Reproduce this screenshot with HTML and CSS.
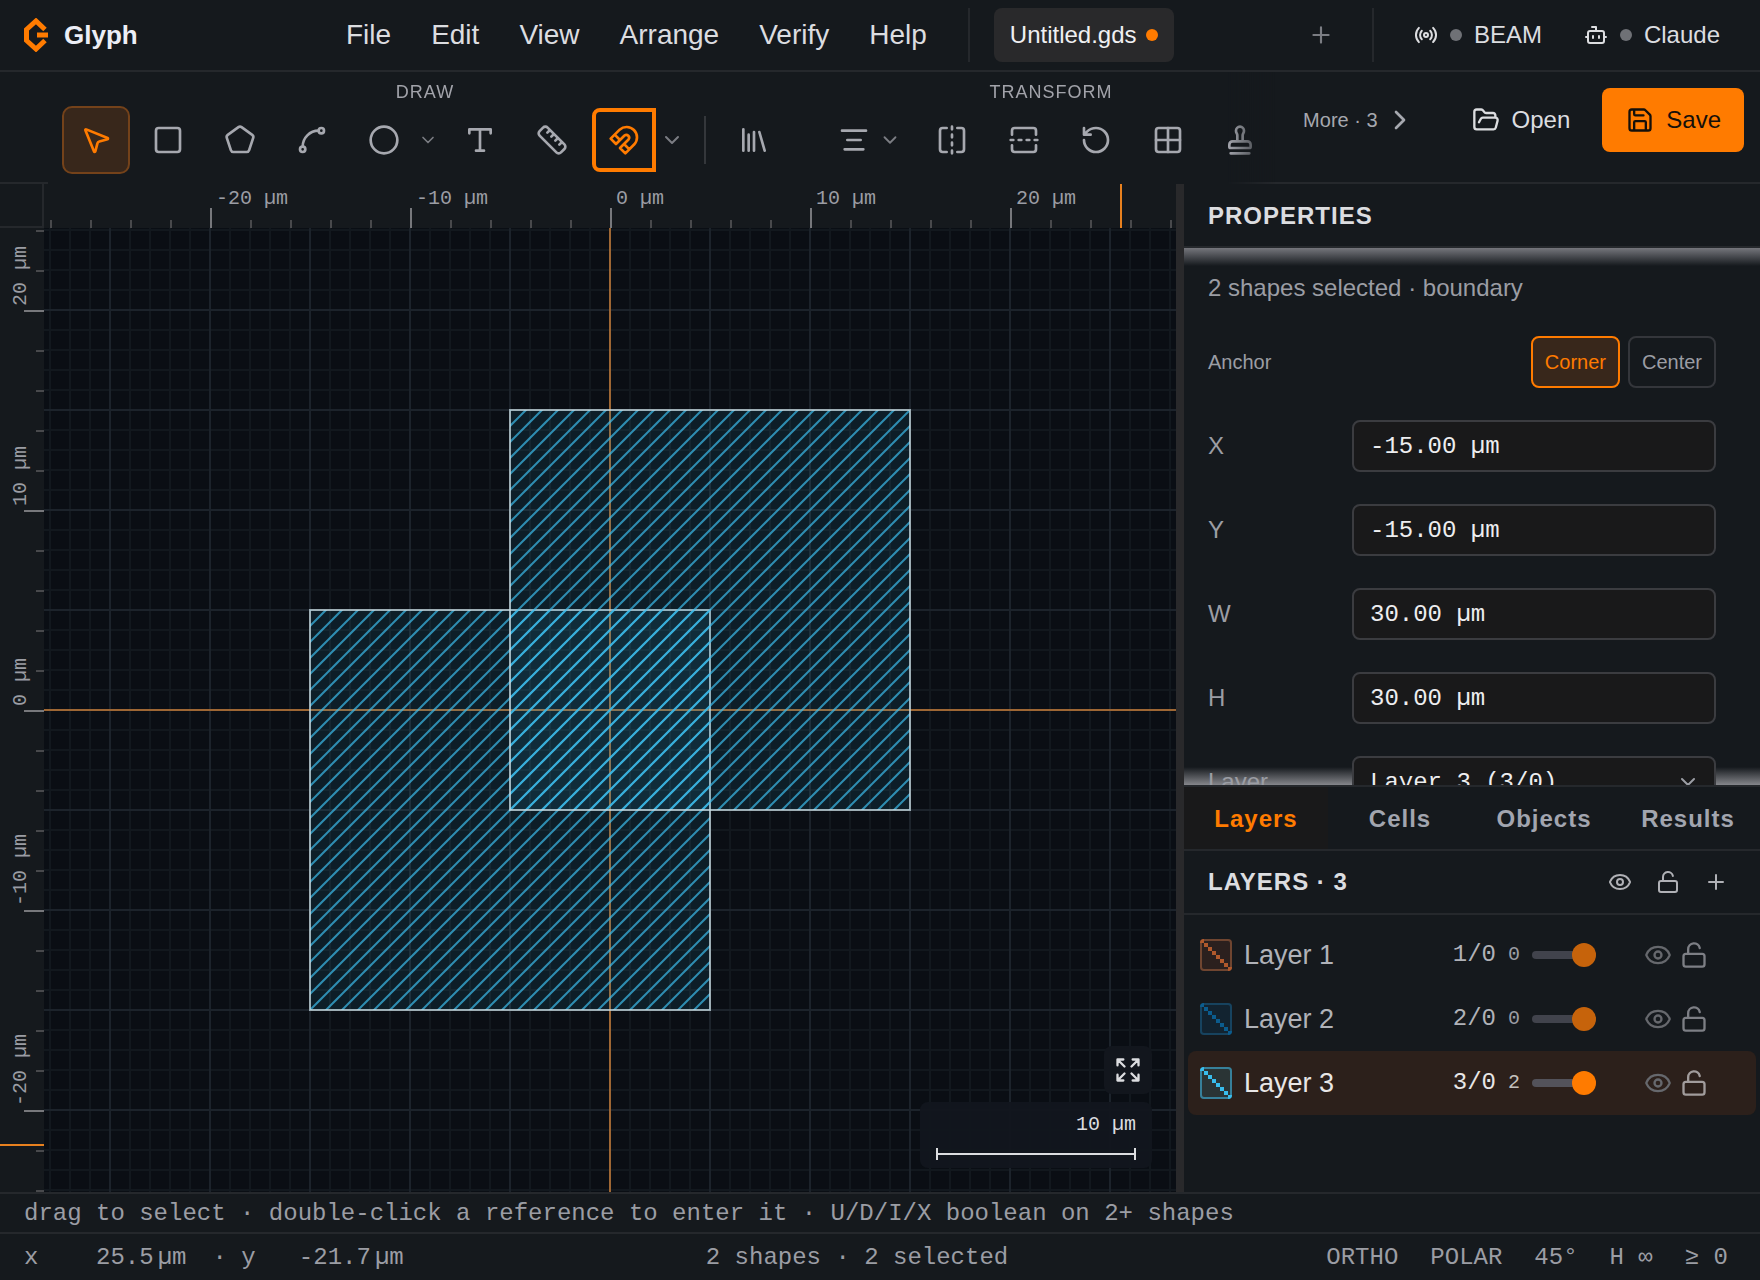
FILE: index.html
```html
<!DOCTYPE html>
<html lang="en">
<head>
<meta charset="utf-8">
<title>Glyph</title>
<link rel="stylesheet" href="styles.css">
</head>
<body>
<svg class="defs" aria-hidden="true">
  <symbol id="i-chevron" viewBox="0 0 24 24"><path d="m6 9 6 6 6-6"/></symbol>
  <symbol id="i-eye" viewBox="0 0 24 24"><path d="M2.062 12.348a1 1 0 0 1 0-.696 10.75 10.75 0 0 1 19.876 0 1 1 0 0 1 0 .696 10.75 10.75 0 0 1-19.876 0"/><circle cx="12" cy="12" r="3"/></symbol>
  <symbol id="i-unlock" viewBox="0 0 24 24"><rect width="18" height="11" x="3" y="11" rx="2"/><path d="M7 11V7a5 5 0 0 1 9.9-1"/></symbol>
  <symbol id="i-plus" viewBox="0 0 24 24"><path d="M5 12h14M12 5v14"/></symbol>
  <symbol id="i-steps" viewBox="0 0 32 32"><path d="M0 0h4v4h4v4h4v4h4v4h4v4h4v4h4v4h4v4h-4v-4h-4v-4h-4v-4h-4v-4h-4v-4h-4v-4h-4v-4h-4z"/></symbol>
</svg>

<div class="app">
  <header class="menubar">
    <div class="brand">
      <svg class="logo" viewBox="0 0 24 34"><path d="M21 11.5 12 3 2.5 11.500V22.500L12 31l9-8.500M24 17H13"/></svg>
      <span>Glyph</span>
    </div>
    <nav class="menus">
      <button>File</button><button>Edit</button><button>View</button><button>Arrange</button><button>Verify</button><button>Help</button>
    </nav>
    <span class="rule"></span>
    <div class="doc-tabs">
      <button class="doc-tab">Untitled.gds<span class="dot dirty"></span></button>
      <button class="new-tab" aria-label="New tab"><svg class="icon s26 thin"><use href="#i-plus"/></svg></button>
    </div>
    <span class="rule"></span>
    <div class="links">
      <button><svg class="icon s24" viewBox="0 0 24 24"><path d="M4.900 19.100C1 15.200 1 8.800 4.900 4.900M7.800 16.200c-2.300-2.300-2.300-6.100 0-8.500"/><circle cx="12" cy="12" r="2"/><path d="M16.200 7.800c2.300 2.300 2.300 6.100 0 8.500M19.100 4.900C23 8.800 23 15.100 19.100 19"/></svg><span class="dot"></span>BEAM</button>
      <button><svg class="icon s24" viewBox="0 0 24 24"><path d="M12 8V4H8"/><rect width="16" height="12" x="4" y="8" rx="2"/><path d="M2 14h2M20 14h2M15 13v2M9 13v2"/></svg><span class="dot"></span>Claude</button>
    </div>
  </header>

  <div class="toolbar">
    <div class="tool-strip">
      <section class="tool-group">
        <h2>DRAW</h2>
        <div class="tools">
          <button class="tool active" aria-label="Select"><svg class="icon s32" viewBox="0 0 24 24"><path d="M4.037 4.688a.495.495 0 0 1 .651-.651l16 6.500a.5.5 0 0 1-.063.947l-6.124 1.580a2 2 0 0 0-1.438 1.435l-1.579 6.126a.5.5 0 0 1-.947.063z"/></svg></button>
          <button class="tool" aria-label="Rectangle"><svg class="icon s32" viewBox="0 0 24 24"><rect width="18" height="18" x="3" y="3" rx="2"/></svg></button>
          <button class="tool" aria-label="Polygon"><svg class="icon s32" viewBox="0 0 24 24"><path d="M10.830 2.380a2 2 0 0 1 2.340 0l8 5.740a2 2 0 0 1 .73 2.250l-3.040 9.260a2 2 0 0 1-1.900 1.370H7.040a2 2 0 0 1-1.900-1.370L2.100 10.370a2 2 0 0 1 .73-2.250z"/></svg></button>
          <button class="tool" aria-label="Path"><svg class="icon s32" viewBox="0 0 24 24"><circle cx="19" cy="5" r="2"/><circle cx="5" cy="19" r="2"/><path d="M5 17A12 12 0 0 1 17 5"/></svg></button>
          <div class="split circle-split">
            <button class="tool" aria-label="Circle"><svg class="icon s32" viewBox="0 0 24 24"><circle cx="12" cy="12" r="10"/></svg></button>
            <button class="more-shapes" aria-label="More shapes"><svg class="icon s20"><use href="#i-chevron"/></svg></button>
          </div>
          <button class="tool" aria-label="Text"><svg class="icon s32" viewBox="0 0 24 24"><path d="M4 7V4h16v3M9 20h6M12 4v16"/></svg></button>
          <button class="tool" aria-label="Ruler"><svg class="icon s32" viewBox="0 0 24 24"><path d="M21.300 15.300a2.400 2.400 0 0 1 0 3.400l-2.600 2.600a2.400 2.400 0 0 1-3.400 0L2.700 8.700a2.410 2.410 0 0 1 0-3.400l2.600-2.600a2.410 2.410 0 0 1 3.400 0ZM14.500 12.500l2-2M11.500 9.500l2-2M8.500 6.500l2-2M17.500 15.500l2-2"/></svg></button>
          <div class="split snap-split">
            <button class="tool snap" aria-label="Snap"><svg class="icon s32" viewBox="0 0 24 24"><path d="m6 15-4-4 6.750-6.770a7.790 7.790 0 0 1 11 11L13 22l-4-4 6.390-6.360a2.140 2.140 0 0 0-3-3L6 15M5 8l4 4M12 15l4 4"/></svg></button>
            <button class="more-shapes wide" aria-label="Snap options"><svg class="icon s24"><use href="#i-chevron"/></svg></button>
          </div>
          <span class="tool-rule"></span>
          <button class="tool" aria-label="Library"><svg class="icon s32" viewBox="0 0 24 24"><path d="m16 6 4 14M12 6v14M8 8v12M4 4v16"/></svg></button>
        </div>
      </section>
      <section class="tool-group">
        <h2>TRANSFORM</h2>
        <div class="tools">
          <div class="split align-split">
            <button class="tool narrow" aria-label="Align"><svg class="icon s32" viewBox="0 0 24 24"><path d="M21 5H3M17 12H7M19 19H5"/></svg></button>
            <button class="more-shapes" aria-label="Align options"><svg class="icon s22"><use href="#i-chevron"/></svg></button>
          </div>
          <button class="tool" aria-label="Flip horizontal"><svg class="icon s32" viewBox="0 0 24 24"><path d="M8 3H5a2 2 0 0 0-2 2v14c0 1.100.9 2 2 2h3M16 3h3a2 2 0 0 1 2 2v14a2 2 0 0 1-2 2h-3M12 20v2M12 14v2M12 8v2M12 2v2"/></svg></button>
          <button class="tool" aria-label="Flip vertical"><svg class="icon s32" viewBox="0 0 24 24"><path d="M21 8V5a2 2 0 0 0-2-2H5a2 2 0 0 0-2 2v3M21 16v3a2 2 0 0 1-2 2H5a2 2 0 0 1-2-2v-3M4 12H2M10 12H8M16 12h-2M22 12h-2"/></svg></button>
          <button class="tool" aria-label="Rotate"><svg class="icon s32" viewBox="0 0 24 24"><path d="M3 12a9 9 0 1 0 9-9 9.750 9.750 0 0 0-6.740 2.740L3 8M3 3v5h5"/></svg></button>
          <button class="tool" aria-label="Array"><svg class="icon s32" viewBox="0 0 24 24"><rect width="18" height="18" x="3" y="3" rx="2"/><path d="M3 12h18M12 3v18"/></svg></button>
          <button class="tool" aria-label="Stamp"><svg class="icon s32" viewBox="0 0 24 24"><path d="M5 22h14M19.270 13.730A2.500 2.500 0 0 0 17.500 13h-11A2.500 2.500 0 0 0 4 15.500V17a1 1 0 0 0 1 1h14a1 1 0 0 0 1-1v-1.500c0-.66-.26-1.300-.73-1.770ZM14 13V8.500C14 7 15 7 15 5a3 3 0 0 0-6 0c0 2 1 2 1 3.500V13"/></svg></button>
        </div>
      </section>
    </div>
    <div class="file-actions">
      <button class="more">More · 3<svg class="icon s32 right"><use href="#i-chevron"/></svg></button>
      <button class="open"><svg class="icon s28" viewBox="0 0 24 24"><path d="m6 14 1.500-2.900A2 2 0 0 1 9.240 10H20a2 2 0 0 1 1.940 2.500l-1.540 6a2 2 0 0 1-1.950 1.500H4a2 2 0 0 1-2-2V5a2 2 0 0 1 2-2h3.900a2 2 0 0 1 1.690.9l.81 1.200a2 2 0 0 0 1.670.9H18a2 2 0 0 1 2 2v2"/></svg>Open</button>
      <button class="save"><svg class="icon s28" viewBox="0 0 24 24"><path d="M15.200 3a2 2 0 0 1 1.400.6l3.800 3.800a2 2 0 0 1 .6 1.400V19a2 2 0 0 1-2 2H5a2 2 0 0 1-2-2V5a2 2 0 0 1 2-2zM17 21v-7a1 1 0 0 0-1-1H8a1 1 0 0 0-1 1v7M7 3v4a1 1 0 0 0 1 1h7"/></svg>Save</button>
    </div>
  </div>

  <main class="workspace">
    <div class="stage">
      <div class="corner"></div>
      <svg class="ruler">
        <defs>
          <pattern id="tx" width="40" height="44" patternUnits="userSpaceOnUse"><rect x="10" y="36" width="2" height="8" fill="#48494c"/></pattern>
          <pattern id="ty" width="44" height="40" patternUnits="userSpaceOnUse"><rect x="36" y="30" width="8" height="2" fill="#48494c"/></pattern>
        </defs>
        <g transform="translate(-44 0)">
          <rect width="4000" height="44" fill="url(#tx)"/>
          <path class="major" d="M211 24v20M411 24v20M611 24v20M811 24v20M1011 24v20"/>
          <text x="216" y="20">-20 µm</text><text x="416" y="20">-10 µm</text><text x="616" y="20">0 µm</text><text x="816" y="20">10 µm</text><text x="1016" y="20">20 µm</text>
          <path class="cursor" d="M1121 0v44"/>
        </g>
      </svg>
      <svg class="ruler">
        <g transform="translate(0 -228)">
          <rect width="44" height="4000" fill="url(#ty)"/>
          <path class="major" d="M24 311h20M24 511h20M24 711h20M24 911h20M24 1111h20"/>
          <text transform="translate(26 306) rotate(-90)">20 µm</text>
          <text transform="translate(26 506) rotate(-90)">10 µm</text>
          <text transform="translate(26 706) rotate(-90)">0 µm</text>
          <text transform="translate(26 906) rotate(-90)">-10 µm</text>
          <text transform="translate(26 1106) rotate(-90)">-20 µm</text>
          <path class="cursor" d="M0 1145h44"/>
        </g>
      </svg>
      <div class="canvas">
        <svg class="drawing">
          <defs>
            <pattern id="minor" width="20" height="20" patternUnits="userSpaceOnUse"><path d="M10 0v20M0 10h20" stroke="#12181e" stroke-width="2"/></pattern>
            <pattern id="majorgrid" width="100" height="100" patternUnits="userSpaceOnUse"><path d="M10 0v100M0 10h100" stroke="#1c232b" stroke-width="2"/></pattern>
            <pattern id="hatch" width="16" height="16" patternUnits="userSpaceOnUse"><path d="M-2 10 10-2M6 18 18 6" stroke="#3cbdec" stroke-opacity=".7" stroke-width="2"/></pattern>
          </defs>
          <g transform="translate(-44 -228)">
            <rect width="4000" height="4000" fill="url(#minor)"/>
            <rect width="4000" height="4000" fill="url(#majorgrid)"/>
            <path class="axis" d="M610 0v4000M0 710h4000"/>
            <g class="shape"><rect class="tint" x="310" y="610" width="400" height="400"/><rect x="310" y="610" width="400" height="400" fill="url(#hatch)"/></g>
            <g class="shape"><rect class="tint" x="510" y="410" width="400" height="400"/><rect x="510" y="410" width="400" height="400" fill="url(#hatch)"/></g>
          </g>
        </svg>
        <div class="canvas-tools">
          <button class="fit" aria-label="Zoom to fit"><svg class="icon s28" viewBox="0 0 24 24"><path d="m15 15 6 6M15 9l6-6M21 16v5h-5M21 8V3h-5M3 16v5h5M3 21l6-6M3 8V3h5M9 9 3 3"/></svg></button>
          <div class="scale">10 µm<span class="scale-bar"></span></div>
        </div>
      </div>
    </div>
    <div class="splitter"></div>
    <aside class="side">
      <section class="properties">
        <h2 class="panel-title">PROPERTIES</h2>
        <form class="prop-body">
          <p>2 shapes selected · boundary</p>
          <div class="row"><span class="anchor-label">Anchor</span><span class="anchor"><button type="button" class="on">Corner</button><button type="button">Center</button></span></div>
          <div class="row"><label for="px">X</label><input id="px" value="-15.00 µm"></div>
          <div class="row"><label for="py">Y</label><input id="py" value="-15.00 µm"></div>
          <div class="row"><label for="pw">W</label><input id="pw" value="30.00 µm"></div>
          <div class="row"><label for="ph">H</label><input id="ph" value="30.00 µm"></div>
          <div class="row"><label for="pl">Layer</label><span class="select"><select id="pl"><option>Layer 3 (3/0)</option></select><svg class="icon s24"><use href="#i-chevron"/></svg></span></div>
        </form>
      </section>
      <section class="browser">
        <nav class="tabs"><button class="on">Layers</button><button>Cells</button><button>Objects</button><button>Results</button></nav>
        <div class="panel-title layers-head"><h2>LAYERS · 3</h2>
          <span class="head-actions">
            <button aria-label="Show all"><svg class="icon s24"><use href="#i-eye"/></svg></button>
            <button aria-label="Unlock all"><svg class="icon s24"><use href="#i-unlock"/></svg></button>
            <button aria-label="Add layer"><svg class="icon s24"><use href="#i-plus"/></svg></button>
          </span>
        </div>
        <ul class="layers">
          <li class="l1"><svg class="swatch"><use href="#i-steps"/></svg><span class="name">Layer 1</span><code>1/0</code><small>0</small><input type="range" value="100" aria-label="Layer 1 opacity"><button class="vis" aria-label="Hide Layer 1"><svg class="icon s28"><use href="#i-eye"/></svg></button><button aria-label="Lock Layer 1"><svg class="icon s28"><use href="#i-unlock"/></svg></button></li>
          <li class="l2"><svg class="swatch"><use href="#i-steps"/></svg><span class="name">Layer 2</span><code>2/0</code><small>0</small><input type="range" value="100" aria-label="Layer 2 opacity"><button class="vis" aria-label="Hide Layer 2"><svg class="icon s28"><use href="#i-eye"/></svg></button><button aria-label="Lock Layer 2"><svg class="icon s28"><use href="#i-unlock"/></svg></button></li>
          <li class="l3 on"><svg class="swatch"><use href="#i-steps"/></svg><span class="name">Layer 3</span><code>3/0</code><small>2</small><input type="range" value="100" aria-label="Layer 3 opacity"><button class="vis" aria-label="Hide Layer 3"><svg class="icon s28"><use href="#i-eye"/></svg></button><button aria-label="Lock Layer 3"><svg class="icon s28"><use href="#i-unlock"/></svg></button></li>
        </ul>
      </section>
    </aside>
  </main>

  <footer>
    <div class="hint">drag to select · double-click a reference to enter it · U/D/I/X boolean on 2+ shapes</div>
    <div class="status">
      <div class="coords"><span class="axis-name">x</span><span class="num">25.5</span><span class="unit">µm</span><span class="axis-name second">· y</span><span class="num">-21.7</span><span class="unit">µm</span></div>
      <div class="count">2 shapes · 2 selected</div>
      <div class="modes"><span>ORTHO</span><span>POLAR</span><span>45°</span><span>H ∞</span><span>≥ 0</span></div>
    </div>
  </footer>
</div>
</body>
</html>
```
FILE: styles.css
```css
:root {
  --bg: #15191d;
  --line: #25282c;
  --text: #dcdde0;
  --muted: #9b9da4;
  --accent: #ff7b00;
  --sans: "Liberation Sans", Arial, sans-serif;
  --mono: "Liberation Mono", "Courier New", monospace;
}
* { box-sizing: border-box; }
body { margin: 0; background: var(--bg); color: var(--text); font: 24px/32px var(--sans); }
button { border: 0; padding: 0; background: none; color: inherit; font: inherit; }
h2, p, ul { margin: 0; padding: 0; font-size: inherit; }
.defs { display: none; }

.icon { fill: none; stroke: currentColor; stroke-width: 2; stroke-linecap: round; stroke-linejoin: round; flex: none; display: block; }
.s20 { width: 20px; height: 20px; }
.s22 { width: 22px; height: 22px; }
.s24 { width: 24px; height: 24px; }
.s26 { width: 26px; height: 26px; }
.s28 { width: 28px; height: 28px; }
.s32 { width: 32px; height: 32px; }
.right { transform: rotate(-90deg); }

.app { display: flex; flex-direction: column; height: 100vh; overflow: hidden; }

/* menu bar */
.menubar { display: flex; align-items: center; flex: none; height: 72px; border-bottom: 2px solid var(--line); padding: 0 40px 0 24px; }
.brand { display: flex; align-items: center; gap: 16px; width: 322px; font-size: 26px; font-weight: bold; color: #eceef6; }
.logo { width: 24px; height: 34px; fill: none; stroke: var(--accent); stroke-width: 5; }
.menus { display: flex; gap: 40px; font-size: 28px; }
.rule { width: 2px; height: 54px; background: var(--line); }
.menus + .rule { margin-left: 41px; }
.doc-tabs { display: flex; flex: 1; align-items: center; justify-content: space-between; padding: 0 38px 0 24px; }
.doc-tab { display: flex; align-items: center; gap: 9px; height: 54px; padding: 0 16px; border-radius: 8px; background: #29292b; color: #f0f0f2; }
.dot { width: 12px; height: 12px; border-radius: 50%; background: #6f7176; }
.dirty { background: var(--accent); }
.new-tab { color: #7b7d83; }
.links { display: flex; gap: 42px; margin-left: 40px; }
.links button { display: flex; align-items: center; }
.links .dot { margin: 0 12px; }

/* toolbar */
.toolbar { display: flex; flex: none; height: 112px; border-bottom: 2px solid var(--line); padding: 0 16px 0 48px; }
.tool-strip { display: flex; flex: 1; gap: 40px; min-width: 0; overflow: hidden; margin-bottom: -2px; padding: 10px 0 0 14px; background: var(--bg); mask-image: linear-gradient(to right, #000 calc(100% - 48px), transparent); }
.tool-group h2 { font-size: 18px; line-height: 20px; font-weight: normal; letter-spacing: 1px; text-align: center; color: #a2a3aa; }
.tool-group { flex: none; }
.tools { display: flex; align-items: center; gap: 4px; height: 68px; margin-top: 4px; color: #a6a8af; }
.tool { display: flex; align-items: center; justify-content: center; width: 68px; height: 68px; border-radius: 10px; }
.tool.active { border: 2px solid #74421a; background: #38271b; color: var(--accent); }
.tool.narrow { width: 52px; }
.tool.snap { width: 64px; height: 64px; border: 4px solid var(--accent); border-radius: 8px 0 0 8px; color: var(--accent); }
.split { display: flex; align-items: center; }
.circle-split { margin-right: 4px; }
.snap-split { margin-left: 2px; }
.align-split { margin-right: 14px; }
.more-shapes { display: flex; justify-content: center; width: 20px; color: #7b7d83; }
.more-shapes.wide { width: 32px; }
.tool-rule { width: 2px; height: 48px; margin: 0 10px 0 12px; background: #34373b; }
.file-actions { display: flex; align-items: center; height: 64px; margin-top: 16px; padding-left: 28px; }
.file-actions button { display: flex; align-items: center; }
.file-actions .more { gap: 6px; font-size: 20px; color: #a6a8af; }
.file-actions .open { gap: 12px; margin: 0 32px 0 56px; }
.file-actions .save { gap: 12px; height: 64px; padding: 0 23px 0 24px; border-radius: 8px; background: var(--accent); color: #15100a; }

/* workspace */
.workspace { display: grid; grid-template-columns: minmax(0, 1fr) 8px 576px; flex: 1; min-height: 0; }
.stage { display: grid; grid-template-columns: 44px minmax(0, 1fr); grid-template-rows: 44px minmax(0, 1fr); min-height: 0; }
.corner { border-right: 2px solid var(--line); border-bottom: 2px solid var(--line); }
.ruler { display: block; width: 100%; height: 100%; font: 20px var(--mono); fill: var(--muted); }
.major { stroke: #77787c; stroke-width: 2; }
.cursor { stroke: #e8811f; stroke-width: 2; }
.canvas { position: relative; min-height: 0; background: #0a0e14; }
.drawing { display: block; width: 100%; height: 100%; }
.axis { stroke: #f5943a; stroke-opacity: .6; stroke-width: 2; }
.shape { stroke: #c9dde4; stroke-opacity: .75; stroke-width: 2; }
.tint { fill: #2fb4e6; fill-opacity: .1; stroke: none; }
.canvas-tools { position: absolute; right: 24px; bottom: 24px; display: flex; flex-direction: column; align-items: flex-end; gap: 8px; }
.fit { display: flex; align-items: center; justify-content: center; width: 48px; height: 48px; border-radius: 8px; background: #12161d; }
.scale { width: 232px; height: 66px; padding: 10px 16px; border-radius: 8px; background: #12161df2; text-align: right; font: 20px/26px var(--mono); }
.scale-bar { display: block; height: 12px; margin-top: 10px; border: solid #dcdde0; border-width: 0 2px; background: linear-gradient(#dcdde0, #dcdde0) center / 100% 2px no-repeat; }
.splitter { background: #29292b; }

/* side panels */
.side { display: flex; flex-direction: column; min-height: 0; }
.properties { display: flex; flex-direction: column; flex: 43 1 0; min-height: 0; }
.browser { flex: 29 1 0; min-height: 0; border-top: 2px solid var(--line); }
.panel-title { flex: none; height: 64px; padding: 0 24px; border-bottom: 2px solid var(--line); line-height: 64px; letter-spacing: 1px; font-weight: bold; }
.prop-body { flex: 1; min-height: 0; overflow: hidden; padding: 24px 44px 0 24px; color: var(--muted);
  background: linear-gradient(#75767c, #15191d00) top / 100% 18px no-repeat, linear-gradient(#15191d00, #85868b) bottom / 100% 18px no-repeat; }
.row { display: flex; align-items: center; justify-content: space-between; height: 52px; margin-top: 32px; }
.row input, .select { width: 364px; height: 52px; }
.row input, .row select { border: 2px solid #3b3c40; border-radius: 8px; padding: 0 16px; background: #19191a; color: #ededef; font: 24px var(--mono); }
.anchor-label { font-size: 20px; }
.anchor { display: flex; gap: 8px; font-size: 20px; }
.anchor button { height: 52px; padding: 0 12px; border: 2px solid #34363b; border-radius: 8px; }
.anchor .on { border-color: var(--accent); background: #38271b; color: var(--accent); }
.select { display: grid; align-items: center; }
.select > * { grid-area: 1 / 1; }
.select select { appearance: none; width: 100%; height: 100%; }
.select .icon { justify-self: end; margin-right: 16px; pointer-events: none; }

.tabs { display: grid; grid-template-columns: repeat(4, 1fr); height: 64px; border-bottom: 2px solid var(--line); color: #a2a5af; font-weight: bold; }
.tabs button { padding-top: 2px; letter-spacing: 1px; }
.tabs .on { background: #19191a; color: var(--accent); }
.layers-head { display: flex; align-items: center; justify-content: space-between; padding-right: 32px; }
.head-actions { display: flex; align-items: center; gap: 24px; color: #b0b1b6; }
.layers { padding: 8px 4px; list-style: none; }
.layers li { display: flex; align-items: center; height: 64px; padding: 0 48px 0 12px; border-radius: 8px; color: #b0b2b8; }
.layers .on { background: #2c201b; color: #e8e6e6; }
.swatch { width: 32px; height: 32px; border-radius: 4px; box-shadow: inset 0 0 0 2px var(--edge); background: var(--wash); fill: var(--ink); }
.l1 { --ink: #b0592c; --edge: #6f4530; --wash: #2b201e; }
.l2 { --ink: #0b5c8e; --edge: #17435f; --wash: #122330; }
.l3 { --ink: #38bcec; --edge: #37809a; --wash: #2a3435; }
.name { flex: 1; padding-left: 12px; font-size: 27px; }
.layers code { font: 24px var(--mono); }
.layers small { margin: 0 12px; font: 20px var(--mono); color: #9b9da4; }
.layers button { color: #7d7f85; }
.layers .on button { color: #a19c9c; }
.layers .vis, .layers .on .vis { margin: 0 8px 0 48px; color: #66686d; }
.layers .on small { color: #c4c0be; }
input[type=range] { appearance: none; width: 64px; height: 24px; margin: 0; background: none; }
input[type=range]::-webkit-slider-runnable-track { height: 8px; border-radius: 4px; background: #41434c; }
input[type=range]::-webkit-slider-thumb { appearance: none; width: 24px; height: 24px; margin-top: -8px; border-radius: 50%; background: #c6630b; }
.on input[type=range]::-webkit-slider-runnable-track { background: #53525a; }
.on input[type=range]::-webkit-slider-thumb { background: var(--accent); }

/* footer */
footer { flex: none; font: 24px/40px var(--mono); color: var(--muted); }
.hint { height: 40px; padding: 0 24px; border-top: 2px solid var(--line); white-space: pre; overflow: hidden; }
.status { display: flex; height: 48px; padding: 0 32px 0 24px; border-top: 2px solid var(--line); line-height: 48px; }
.coords { display: flex; }
.num { width: 8ch; text-align: right; }
.unit { margin-left: 4px; }
.second { margin-left: 26px; }
.count { flex: 1; padding-right: 16px; text-align: center; }
.modes { display: flex; gap: 32px; }
```
